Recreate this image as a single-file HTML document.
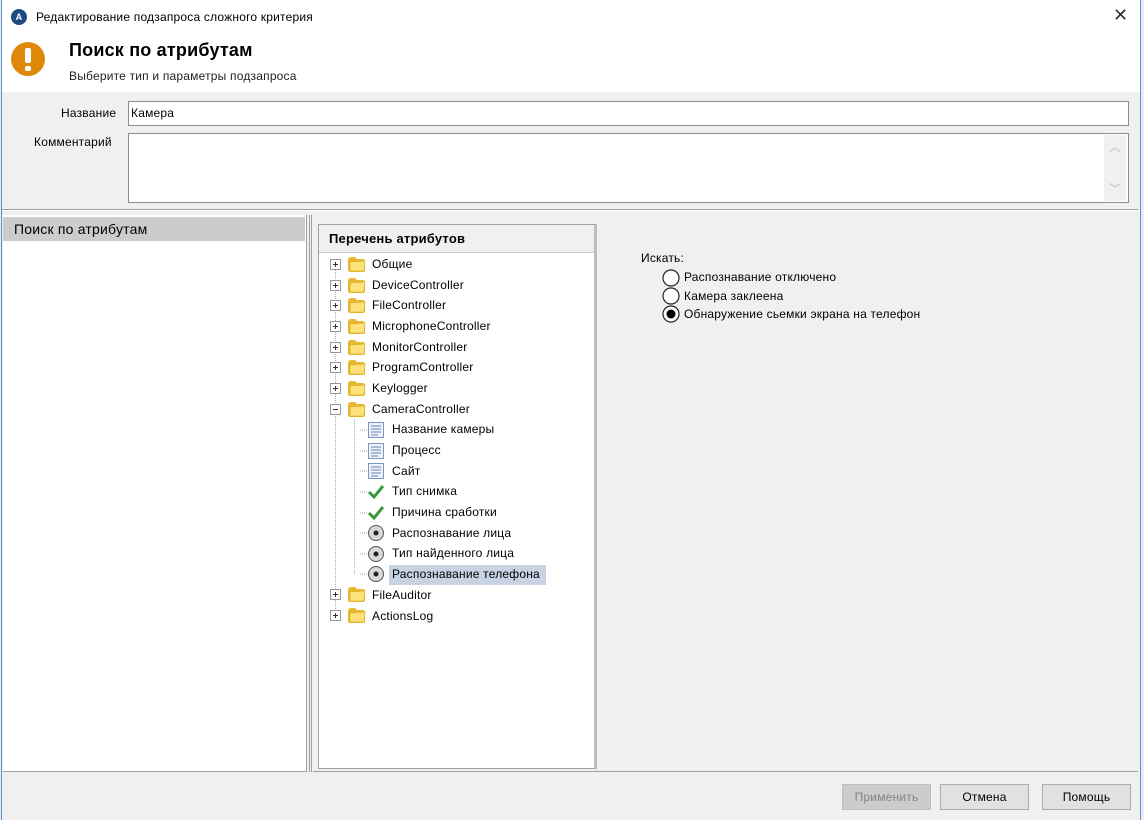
<!DOCTYPE html>
<html><head><meta charset="utf-8"><style>
*{margin:0;padding:0;box-sizing:border-box}
body{width:1144px;height:820px;background:#e9eef3;font-family:"Liberation Sans","DejaVu Sans",sans-serif;font-size:12px;color:#000;position:relative;overflow:hidden;letter-spacing:0.2px}
.a{position:absolute}
.win{left:1px;top:0;width:1140px;height:820px;background:#f0f0f0;border-left:1px solid #5b8ccf;border-right:1px solid #5b8ccf}
.t{white-space:nowrap}
.row{position:absolute;height:20px;line-height:20px;white-space:nowrap}
.btn{position:absolute;top:784px;height:26px;border:1px solid #adadad;background:#e1e1e1;text-align:center;line-height:24px;font-size:12px}
</style></head><body>
<div class="a win"></div>
<div class="a" style="left:2px;top:0;width:1138px;height:92px;background:#fff"></div>
<div class="a" style="left:11px;top:9px;width:16px;height:16px;border-radius:50%;background:#1e4a82;color:#fff;font-size:9px;text-align:center;line-height:16px;font-weight:bold">A</div>
<div class="a t" style="left:36px;top:10px;font-size:12px;color:#000">Редактирование подзапроса сложного критерия</div>
<div class="a" style="left:1113px;top:5px;font-size:18px;color:#333">✕</div>
<div class="a" style="left:11px;top:42px;width:34px;height:34px;border-radius:50%;background:#e0880a"></div>
<div class="a" style="left:25px;top:48px;width:6px;height:15px;background:#fff;border-radius:2px"></div>
<div class="a" style="left:25px;top:66px;width:6px;height:5px;background:#fff;border-radius:2px"></div>
<div class="a t" style="left:69px;top:40px;font-size:18px;font-weight:bold">Поиск по атрибутам</div>
<div class="a t" style="left:69px;top:69px;font-size:12px;color:#222">Выберите тип и параметры подзапроса</div>
<div class="a t" style="left:61px;top:106px;font-size:12px">Название</div>
<div class="a" style="left:128px;top:101px;width:1001px;height:25px;background:#fff;border:1px solid #8c8c8c;padding:4px 2px;font-size:12px">Камера</div>
<div class="a t" style="left:34px;top:135px;font-size:12px">Комментарий</div>
<div class="a" style="left:128px;top:133px;width:1001px;height:70px;background:#fff;border:1px solid #8c8c8c"></div>
<div class="a" style="left:1104px;top:135px;width:22px;height:66px;background:#f0f0f0"></div>
<div class="a" style="left:1109px;top:138px;color:#bbb;font-size:12px">︿</div>
<div class="a" style="left:1109px;top:180px;color:#bbb;font-size:12px">﹀</div>
<div class="a" style="left:2px;top:209px;width:1136px;height:1px;background:#a0a0a0"></div>
<div class="a" style="left:2px;top:210px;width:1136px;height:1px;background:#fff"></div>
<div class="a" style="left:3px;top:215px;width:304px;height:557px;background:#fff;border-right:1px solid #a0a0a0;border-bottom:1px solid #a0a0a0"></div>
<div class="a" style="left:3px;top:217px;width:302px;height:24px;background:#cccccc"></div>
<div class="a t" style="left:14px;top:221px;font-size:14px">Поиск по атрибутам</div>
<div class="a" style="left:309px;top:215px;width:3px;height:557px;border-left:1px solid #a0a0a0;border-right:1px solid #a0a0a0"></div>
<div class="a" style="left:313px;top:215px;width:825px;height:557px;border-bottom:1px solid #a0a0a0"></div>
<div class="a" style="left:318px;top:224px;width:279px;height:545px;background:#fff;border:1px solid #a0a0a0;border-right:3px solid #bdbdbd"></div>
<div class="a" style="left:319px;top:225px;width:275px;height:28px;background:#f0f0f0;border-bottom:1px solid #c8c8c8"></div>
<div class="a t" style="left:329px;top:231px;font-size:13px;font-weight:bold">Перечень атрибутов</div>
<svg class="a" style="left:318px;top:253px" width="240" height="380">
<defs>
<g id="pl"><rect x="0.5" y="0.5" width="10" height="10" fill="#fff" stroke="#999"/><path d="M3 5.5h5M5.5 3v5" stroke="#333"/></g>
<g id="mi"><rect x="0.5" y="0.5" width="10" height="10" fill="#fff" stroke="#999"/><path d="M3 5.5h5" stroke="#333"/></g>
<g id="fo"><path d="M1 5 Q1 2 4 2 L8 2 L10 4 L16 4 Q18 4 18 7 L18 15 Q18 17 16 17 L3 17 Q1 17 1 15Z" fill="#e8b830"/><path d="M3 7 L18 6 L17 16 L3 16Z" fill="#fbe27a" stroke="#d9a520" stroke-width="0.6"/></g>
<g id="li"><rect x="0.5" y="0.5" width="15" height="15" fill="#eef3fb" stroke="#7d95c0"/><path d="M3 4h10M3 7h10M3 10h10M3 13h7" stroke="#6a80b0"/></g>
<g id="ck"><path d="M1 8 L6 13 L15 2" fill="none" stroke="#3a9a3a" stroke-width="3"/></g>
<g id="rb"><circle cx="8" cy="8" r="7.5" fill="#d8d8d8" stroke="#555"/><circle cx="8" cy="8" r="2.5" fill="#222"/></g>
</defs>
<g stroke="#aaa" stroke-dasharray="1 1">
<path d="M17.5 17V362M36.5 166V321"/>
<path d="M42 177h8M42 198h8M42 218h8M42 239h8M42 260h8M42 280h8M42 301h8M42 321h8"/>
</g>
<use href="#pl" x="12" y="6"/><use href="#fo" x="29" y="2"/>
<use href="#pl" x="12" y="27"/><use href="#fo" x="29" y="23"/>
<use href="#pl" x="12" y="47"/><use href="#fo" x="29" y="43"/>
<use href="#pl" x="12" y="68"/><use href="#fo" x="29" y="64"/>
<use href="#pl" x="12" y="89"/><use href="#fo" x="29" y="85"/>
<use href="#pl" x="12" y="109"/><use href="#fo" x="29" y="105"/>
<use href="#pl" x="12" y="130"/><use href="#fo" x="29" y="126"/>
<use href="#mi" x="12" y="151"/><use href="#fo" x="29" y="147"/>
<use href="#li" x="50" y="169"/>
<use href="#li" x="50" y="190"/>
<use href="#li" x="50" y="210"/>
<use href="#ck" x="50" y="231"/>
<use href="#ck" x="50" y="252"/>
<use href="#rb" x="50" y="272"/>
<use href="#rb" x="50" y="293"/>
<use href="#rb" x="50" y="313"/>
<use href="#pl" x="12" y="336"/><use href="#fo" x="29" y="332"/>
<use href="#pl" x="12" y="357"/><use href="#fo" x="29" y="353"/>
<circle cx="247" cy="158" r="4.5" fill="none" stroke="#888"/>
</svg>
<div class="a" style="left:389px;top:565px;width:157px;height:20px;background:#c7d3e3"></div>
<div class="row" style="left:372px;top:254px">Общие</div>
<div class="row" style="left:372px;top:275px">DeviceController</div>
<div class="row" style="left:372px;top:295px">FileController</div>
<div class="row" style="left:372px;top:316px">MicrophoneController</div>
<div class="row" style="left:372px;top:337px">MonitorController</div>
<div class="row" style="left:372px;top:357px">ProgramController</div>
<div class="row" style="left:372px;top:378px">Keylogger</div>
<div class="row" style="left:372px;top:399px">CameraController</div>
<div class="row" style="left:392px;top:419px">Название камеры</div>
<div class="row" style="left:392px;top:440px">Процесс</div>
<div class="row" style="left:392px;top:461px">Сайт</div>
<div class="row" style="left:392px;top:481px">Тип снимка</div>
<div class="row" style="left:392px;top:502px">Причина сработки</div>
<div class="row" style="left:392px;top:523px">Распознавание лица</div>
<div class="row" style="left:392px;top:543px">Тип найденного лица</div>
<div class="row" style="left:392px;top:564px">Распознавание телефона</div>
<div class="row" style="left:372px;top:585px">FileAuditor</div>
<div class="row" style="left:372px;top:606px">ActionsLog</div>
<div class="a t" style="left:641px;top:251px">Искать:</div>
<svg class="a" style="left:661px;top:268px" width="22" height="60">
<circle cx="10" cy="10" r="8" fill="#fff" stroke="#222" stroke-width="1.2"/>
<circle cx="10" cy="28" r="8" fill="#fff" stroke="#222" stroke-width="1.2"/>
<circle cx="10" cy="46" r="8" fill="#fff" stroke="#222" stroke-width="1.2"/>
<circle cx="10" cy="46" r="4.5" fill="#000"/>
</svg>
<div class="row" style="left:684px;top:267px">Распознавание отключено</div>
<div class="row" style="left:684px;top:286px">Камера заклеена</div>
<div class="row" style="left:684px;top:304px">Обнаружение сьемки экрана на телефон</div>
<div class="btn" style="left:842px;width:89px;background:#cccccc;border-color:#bfbfbf;color:#838383">Применить</div>
<div class="btn" style="left:940px;width:89px">Отмена</div>
<div class="btn" style="left:1042px;width:89px">Помощь</div>
</body></html>
